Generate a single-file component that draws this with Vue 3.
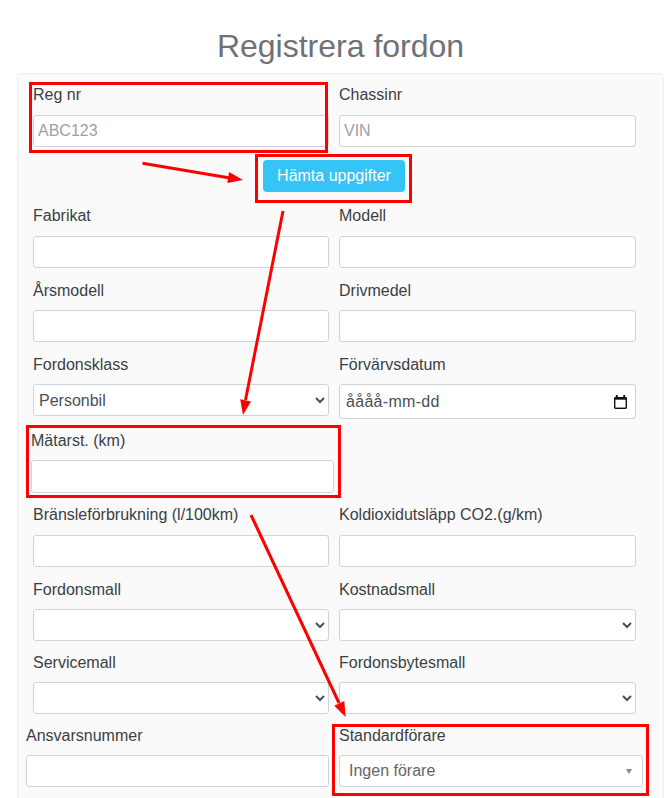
<script setup>
const rowsTop = [
  { cls: 'mt-13', fields: [{ label: 'Fabrikat' }, { label: 'Modell' }] },
  { cls: 'mt-11 low', fields: [{ label: 'Årsmodell' }, { label: 'Drivmedel' }] }
]
const rowsBottom = [
  { cls: 'mt-11', fields: [{ label: 'Bränsleförbrukning (l/100km)' }, { label: 'Koldioxidutsläpp CO2.(g/km)' }] },
  { cls: 'mt-11 low', fields: [{ label: 'Fordonsmall', select: true }, { label: 'Kostnadsmall', select: true }] },
  { cls: 'mt-10 low', fields: [{ label: 'Servicemall', select: true }, { label: 'Fordonsbytesmall', select: true }] }
]
</script>

<template>
  <div class="page">
    <h1 class="title">Registrera fordon</h1>
    <form class="panel" @submit.prevent>
      <div class="row">
        <div class="field">
          <label>Reg nr</label>
          <input class="control" type="text" placeholder="ABC123" />
        </div>
        <div class="field">
          <label>Chassinr</label>
          <input class="control" type="text" placeholder="VIN" />
        </div>
      </div>

      <button class="fetch" type="button">Hämta uppgifter</button>

      <div v-for="row in rowsTop" :key="row.fields[0].label" class="row" :class="row.cls">
        <div v-for="f in row.fields" :key="f.label" class="field">
          <label>{{ f.label }}</label>
          <input class="control" type="text" />
        </div>
      </div>

      <div class="row mt-11 low">
        <div class="field">
          <label>Fordonsklass</label>
          <select class="control select">
            <option>Personbil</option>
          </select>
        </div>
        <div class="field">
          <label>Förvärvsdatum</label>
          <div class="date">
            <input class="control date-input" type="text" value="åååå-mm-dd" />
            <svg class="calendar" width="13" height="14" viewBox="0 0 14 15" aria-hidden="true">
              <path d="M2 0h2v2h6V0h2v2h.5A1.5 1.5 0 0 1 14 3.5v10a1.5 1.5 0 0 1-1.500 1.500h-11A1.500 1.500 0 0 1 0 13.500v-10A1.500 1.500 0 0 1 1.500 2H2z" fill="#111" />
              <rect x="1.500" y="5" width="11" height="8.500" fill="#fff" />
            </svg>
          </div>
        </div>
      </div>

      <div class="field odometer low">
        <label>Mätarst. (km)</label>
        <input class="control tall" type="text" />
      </div>

      <div v-for="row in rowsBottom" :key="row.fields[0].label" class="row" :class="row.cls">
        <div v-for="f in row.fields" :key="f.label" class="field">
          <label>{{ f.label }}</label>
          <select v-if="f.select" class="control select"><option></option></select>
          <input v-else class="control" type="text" />
        </div>
      </div>

      <div class="row wide mt-10 low">
        <div class="field">
          <label>Ansvarsnummer</label>
          <input class="control" type="text" />
        </div>
        <div class="field">
          <label>Standardförare</label>
          <div class="combo">
            <span>Ingen förare</span>
            <i class="caret"></i>
          </div>
        </div>
      </div>
    </form>

    <svg class="marks" width="665" height="798" viewBox="0 0 665 798" aria-hidden="true">
      <g fill="none" stroke="#f00" stroke-width="3">
        <rect x="30.500" y="83.500" width="296" height="68" />
        <rect x="256.500" y="155.500" width="154" height="46" />
        <rect x="27.500" y="426.500" width="312" height="70" />
        <rect x="333.500" y="725.500" width="314" height="69" />
        <path d="M142.500 163.300 L230 178" />
        <path d="M283 211 L245.500 400" />
        <path d="M251 515 L339 703" />
      </g>
      <g fill="#f00">
        <polygon points="243,180 227.300,182.900 229.100,172.100" />
        <polygon points="243,415 251,401.400 240.200,399.200" />
        <polygon points="345.700,717 344.300,701.100 334.300,705.700" />
      </g>
    </svg>
  </div>
</template>

<style>
html, body { margin: 0; background: #fff; overflow: hidden; }
</style>

<style scoped>
.page {
  position: relative;
  box-sizing: border-box;
  width: 665px;
  height: 798px;
  overflow: hidden;
  padding: 27px 0 0 17px;
  font-family: "Liberation Sans", Arial, sans-serif;
  color: #3a3f44;
}
.title {
  width: 647px;
  margin: 0 0 8px;
  font-size: 32px;
  font-weight: 400;
  line-height: 38px;
  text-align: center;
  color: #6e7275;
}
.panel {
  box-sizing: border-box;
  width: 647px;
  height: 760px;
  padding: 10px 0 0 15px;
  background: #fafafa;
  border: 1px solid #eee;
  border-radius: 4px;
}
.row {
  display: grid;
  grid-template-columns: 296px 297px;
  column-gap: 10px;
  align-items: start;
}
.row.wide {
  grid-template-columns: 303px 304px;
  margin-left: -7px;
}
.mt-10 { margin-top: 10px; }
.mt-11 { margin-top: 11px; }
.mt-13 { margin-top: 13px; }
.field label {
  display: block;
  margin-bottom: 10px;
  font-size: 16px;
  line-height: 21px;
}
.low label,
.low.field label {
  padding-top: 1px;
  margin-bottom: 9px;
}
.control {
  display: block;
  box-sizing: border-box;
  width: 100%;
  height: 32px;
  margin: 0;
  padding: 0 4px;
  font: 16px "Liberation Sans", Arial, sans-serif;
  color: #495057;
  background: #fff;
  border: 1px solid #ced4da;
  border-radius: 3px;
  outline: none;
}
.control::placeholder { color: #a0a0a0; opacity: 1; }
.select { padding: 0 1px; }
.date { position: relative; }
.date-input { height: 35px; padding-left: 6px; letter-spacing: 0.3px; }
.calendar {
  position: absolute;
  top: 11px;
  right: 9px;
}
.odometer {
  width: 303px;
  margin: 10px 0 0 -2px;
}
.tall { height: 33px; }
.fetch {
  display: block;
  box-sizing: border-box;
  width: 142px;
  height: 32px;
  margin: 13px 0 0 230px;
  padding: 0;
  font: 16px "Liberation Sans", Arial, sans-serif;
  color: #fff;
  background: #35c4f5;
  border: 0;
  border-radius: 4px;
}
.combo {
  display: flex;
  align-items: center;
  justify-content: space-between;
  box-sizing: border-box;
  height: 32px;
  padding: 0 10px 0 9px;
  font-size: 16px;
  color: #666;
  background: #fff;
  border: 1px solid #d4d4d4;
  border-radius: 3px;
}
.caret {
  width: 0;
  height: 0;
  border-style: solid;
  border-width: 5px 3.500px 0;
  border-color: #888 transparent transparent;
}
.marks {
  position: absolute;
  top: 0;
  left: 0;
  pointer-events: none;
}
</style>
